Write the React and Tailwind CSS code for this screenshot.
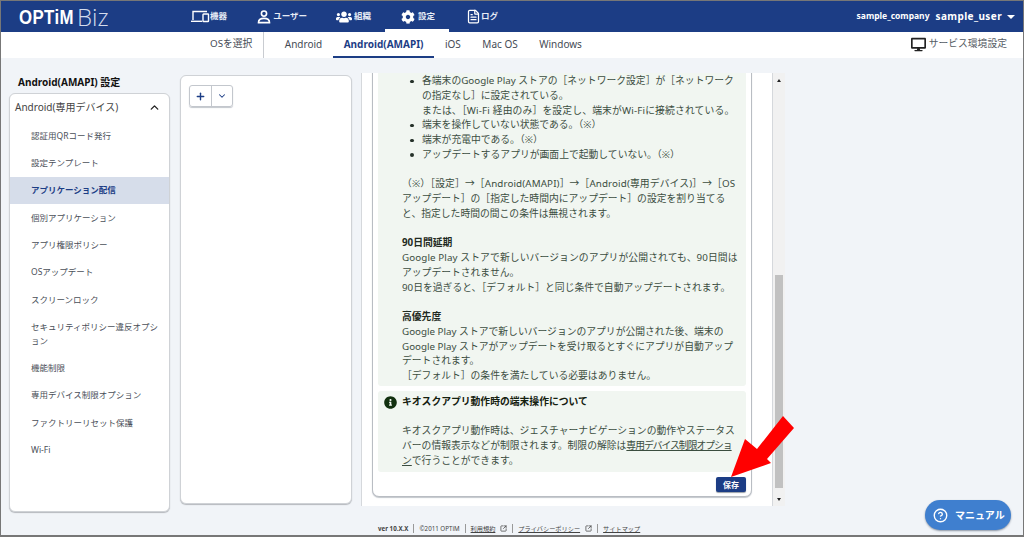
import React from "react";
import { ChevronDown, ChevronUp, CircleHelp, FileText, Plus, SquareArrowOutUpRight } from "lucide-react";
import { FaCog, FaDesktop, FaInfoCircle, FaUsers } from "react-icons/fa";

const font = "font-['Noto_Sans','Noto_Sans_CJK_JP',sans-serif]";

const DeviceIcon = () => (
  <svg width="19" height="13" viewBox="0 0 19 13" fill="none" stroke="currentColor" strokeWidth="1.4">
    <path d="M2 10V1.5h14" />
    <path d="M0 11.3h11" />
    <rect x="12" y="4" width="5.5" height="7.5" rx="0.6" />
  </svg>
);

const UserIcon = () => (
  <svg width="14" height="14" viewBox="0 0 14 14" fill="none" stroke="currentColor" strokeWidth="1.6">
    <circle cx="7" cy="3.6" r="2.6" />
    <path d="M1.5 12.6c0-2.8 2.2-4.2 5.5-4.2s5.5 1.4 5.5 4.2z" />
  </svg>
);

const navItems = [
  { label: "機器", icon: <DeviceIcon />, box: "w-[35px]" },
  { label: "ユーザー", icon: <UserIcon />, box: "ml-[31px] w-[50px]" },
  { label: "組織", icon: <FaUsers size={16} />, box: "ml-[29px] w-[35px]" },
  { label: "設定", icon: <FaCog size={14} />, box: "ml-[30px] w-[34px]", active: true },
  { label: "ログ", icon: <FileText size={15} strokeWidth={2} />, box: "ml-[31px] w-[32px]" },
];

const osTabs = ["Android", "Android(AMAPI)", "iOS", "Mac OS", "Windows"];

const sideItems = [
  "認証用QRコード発行",
  "設定テンプレート",
  "アプリケーション配信",
  "個別アプリケーション",
  "アプリ権限ポリシー",
  "OSアップデート",
  "スクリーンロック",
  "セキュリティポリシー違反オプション",
  "機能制限",
  "専用デバイス制限オプション",
  "ファクトリーリセット保護",
  "Wi-Fi",
];

const Header = () => (
  <header className="flex h-[31px] shrink-0 items-center bg-[#1c3d85] text-white">
    <div className="flex w-[189px] items-center pl-[18px]">
      <span className="w-[58px] origin-left scale-x-[0.8] whitespace-nowrap font-['Liberation_Sans',sans-serif] text-[21px] font-bold leading-none tracking-[0.5px]">
        OPTiM
      </span>
      <span className="font-['Open_Sans',sans-serif] text-[24px] font-light leading-none text-[#d5dcec]">Biz</span>
    </div>
    <nav className="flex h-full items-center pl-[1px]">
      {navItems.map((item) => (
        <div key={item.label} className={`relative flex h-full items-center justify-between ${item.box}`}>
          {item.active && <div className="absolute bottom-0 left-[-16px] right-[-14px] h-[3px] bg-white" />}
          <span className="flex items-center">{item.icon}</span>
          <span className="whitespace-nowrap text-[8.5px] font-bold text-[#e6ebf5]">{item.label}</span>
        </div>
      ))}
    </nav>
    <div className="ml-auto flex items-center gap-[6px] pr-[8px] font-bold">
      <span className="text-[8.5px]">sample_company</span>
      <span className="text-[10px] tracking-[0.4px]">sample_user</span>
      <span className="ml-[-1px] h-0 w-0 border-x-[4px] border-t-[4px] border-x-transparent border-t-white" />
    </div>
  </header>
);

const SubNav = () => (
  <div className="flex h-[26px] shrink-0 items-center bg-white pl-[209px] text-[9.8px] text-[#454b55]">
    <span className="w-[44px] whitespace-nowrap pb-[1px]">OSを選択</span>
    <div className="ml-[9px] h-full w-[1px] bg-[#c9ccd1]" />
    <div className="ml-[10px] flex h-full text-[10px]">
      {osTabs.map((tab) => (
        <div
          key={tab}
          className={`flex h-full items-center px-[10.75px] ${
            tab === "Android(AMAPI)" ? "border-b-2 border-[#1c3d85] pt-[1px] font-bold text-[#1c3d85]" : "pb-[1px]"
          }`}
        >
          {tab}
        </div>
      ))}
    </div>
    <div className="ml-auto flex items-center gap-[3px] pb-[1px] pr-[16px] text-[#555b64]">
      <FaDesktop size={15} className="text-[#222]" />
      <span className="text-[9.8px]">サービス環境設定</span>
    </div>
  </div>
);

const Sidebar = () => (
  <div className="w-[161px] shrink-0">
    <h2 className="mt-[16px] h-[19px] pl-[9px] text-[10px] font-bold leading-[17px] text-[#111]">Android(AMAPI) 設定</h2>
    <div className="h-[419px] rounded-[6px] border border-[#cfd2d6] bg-white shadow-[0_1px_1px_#b5b8bd]">
      <div className="flex h-[27px] items-center justify-between pl-[5px] pr-[8px] text-[10px] text-[#444]">
        <span>Android(専用デバイス)</span>
        <ChevronUp size={13} strokeWidth={2.5} className="text-[#222]" />
      </div>
      <ul className="pt-[1px]">
        {sideItems.map((item) => (
          <li
            key={item}
            className={`flex min-h-[27.3px] items-center pl-[21px] pr-[8px] text-[8.5px] leading-[13.5px] ${
              item === "セキュリティポリシー違反オプション" ? "py-[7px]" : "py-[6.5px]"
            } ${item === "アプリケーション配信" ? "bg-[#d6ddea] font-bold text-[#1c3d85]" : "text-[#4a4f58]"}`}
          >
            <span>{item}</span>
          </li>
        ))}
      </ul>
    </div>
  </div>
);

const ProfileList = () => (
  <div className="ml-[1px] mt-[17px] h-[429px] w-[172px] shrink-0 rounded-[6px] border border-[#cfd2d6] bg-white pl-[8px] pt-[9px] shadow-[0_1px_1px_#b5b8bd]">
    <div className="flex h-[22px] w-[44px] rounded-[3px] border border-[#c3c7cd] shadow-[0_1px_1px_#c3c7cd]">
      <div className="flex w-[22px] items-center justify-center border-r border-[#c3c7cd] text-[#1c3d85]">
        <Plus size={11} strokeWidth={3} />
      </div>
      <div className="flex flex-1 items-center justify-center text-[#1c3d85]">
        <ChevronDown size={10} strokeWidth={2.5} />
      </div>
    </div>
  </div>
);

const Bullet = ({ children }) => (
  <li className="relative pl-[20px] before:absolute before:left-[8px] before:top-[5.5px] before:h-[3.5px] before:w-[3.5px] before:rounded-full before:bg-[#26322a] before:content-['']">
    {children}
  </li>
);

const Detail = () => (
  <div className="mt-[15px] flex h-[433px] w-[424px] shrink-0 overflow-hidden border-l border-[#d5d8dc] bg-white">
    <div className="w-[410px] shrink-0 pl-[10px]">
      <div className="mt-[-10px] h-[434px] w-[380px] rounded-b-[7px] border border-[#b9bdc3] bg-white px-[5px] shadow-[0_1px_1px_#c3c7cd]">
        <div className="h-[322px] overflow-hidden rounded-b-[3px] bg-[#f1f6f1] pl-[24px] pt-[10px] text-[9.8px] leading-[14.75px] whitespace-nowrap text-[#3b4d3f]">
          <ul>
            <Bullet>
              各端末のGoogle Play ストアの［ネットワーク設定］が［ネットワーク
              <br />
              の指定なし］に設定されている。
              <br />
              <span className="tracking-[0.15px]">または、［Wi-Fi 経由のみ］を設定し、端末がWi-Fiに接続されている。</span>
            </Bullet>
            <Bullet>端末を操作していない状態である。（※）</Bullet>
            <Bullet>端末が充電中である。（※）</Bullet>
            <Bullet>アップデートするアプリが画面上で起動していない。（※）</Bullet>
          </ul>
          <p className="mt-[14.75px]">
            <span className="tracking-[0.12px]">（※）［設定］→［Android(AMAPI)］→［Android(専用デバイス)］→［OS</span>
            <br />
            アップデート］の［指定した時間内にアップデート］の設定を割り当てる
            <br />
            と、指定した時間の間この条件は無視されます。
          </p>
          <p className="mt-[14.75px] font-bold text-[#1f2a22]">90日間延期</p>
          <p>
            <span className="tracking-[0.1px]">Google Play ストアで新しいバージョンのアプリが公開されても、90日間は</span>
            <br />
            アップデートされません。
            <br />
            90日を過ぎると、［デフォルト］と同じ条件で自動アップデートされます。
          </p>
          <p className="mt-[14.75px] font-bold text-[#1f2a22]">高優先度</p>
          <p>
            Google Play ストアで新しいバージョンのアプリが公開された後、端末の
            <br />
            Google Play ストアがアップデートを受け取るとすぐにアプリが自動アップ
            <br />
            デートされます。
            <br />
            ［デフォルト］の条件を満たしている必要はありません。
          </p>
        </div>
        <div className="mt-[5px] h-[81px] rounded-[3px] bg-[#f1f6f1] pl-[24px] pt-[4px] text-[9.8px] leading-[14.67px] whitespace-nowrap text-[#3b4d3f]">
          <div className="relative font-bold text-[#14200f]">
            <FaInfoCircle size={13} className="absolute left-[-18px] top-[1px] text-[#12300f]" />
            キオスクアプリ動作時の端末操作について
          </div>
          <p className="mt-[14.67px]">
            キオスクアプリ動作時は、ジェスチャーナビゲーションの動作やステータス
            <br />
            バーの情報表示などが制限されます。制限の解除は
            <span className="tracking-[-1px] underline">専用デバイス制限オプショ</span>
            <br />
            <span className="underline">ン</span>で行うことができます。
          </p>
        </div>
        <div className="mt-[5px] flex justify-end">
          <button className="flex h-[15px] w-[30px] items-center justify-center rounded-[2px] bg-[#1c3d85] text-[8px] font-bold text-white shadow-[0_1px_1px_#9aa0a8]">
            保存
          </button>
        </div>
      </div>
    </div>
    <div className="flex w-[13px] flex-col items-center border-l border-[#d5d8dc] bg-[#f1f1f1]">
      <span className="mt-[6px] h-0 w-0 border-x-[2.5px] border-b-[3px] border-x-transparent border-b-[#222]" />
      <div className="mt-[193px] h-[213px] w-[8px] bg-[#c1c1c1]" />
      <span className="mt-[10px] h-0 w-0 border-x-[2.5px] border-t-[3px] border-x-transparent border-t-[#222]" />
    </div>
  </div>
);

const Footer = () => (
  <footer className="absolute bottom-[2px] left-[377px] flex items-center gap-[5px] text-[6.2px] text-[#444]">
    <span className="font-bold">ver 10.X.X</span>
    <span className="h-[9px] w-px bg-[#999]" />
    <span>©2011 OPTiM</span>
    <span className="h-[9px] w-px bg-[#999]" />
    <span className="underline">利用規約</span>
    <SquareArrowOutUpRight size={7} strokeWidth={2.5} />
    <span className="h-[9px] w-px bg-[#999]" />
    <span className="underline">プライバシーポリシー</span>
    <SquareArrowOutUpRight size={7} strokeWidth={2.5} />
    <span className="h-[9px] w-px bg-[#999]" />
    <span className="underline">サイトマップ</span>
  </footer>
);

const App = () => (
  <div className={`relative flex h-[537px] flex-col overflow-hidden border border-[#777] border-b-2 bg-[#f1f4f8] ${font}`}>
    <Header />
    <SubNav />
    <main className="flex items-start gap-[9px] pl-[8px]">
      <Sidebar />
      <ProfileList />
      <Detail />
    </main>
    <Footer />

    <button className="absolute bottom-[5px] right-[12px] flex h-[30px] w-[86px] items-center gap-[7px] rounded-full bg-[#3f7fcf] pl-[8px] text-[10px] font-bold text-white shadow-[0_1px_2px_#8a94a3]">
      <CircleHelp size={15} strokeWidth={2.2} />
      マニュアル
    </button>

    <svg className="absolute left-[-1px] top-[-1px]" width="1024" height="537" fill="none">
      <polygon points="731,477 745,439 757,449 783,416 794,428 767,459 771,463" fill="#ff0000" />
    </svg>
  </div>
);

export default App;
